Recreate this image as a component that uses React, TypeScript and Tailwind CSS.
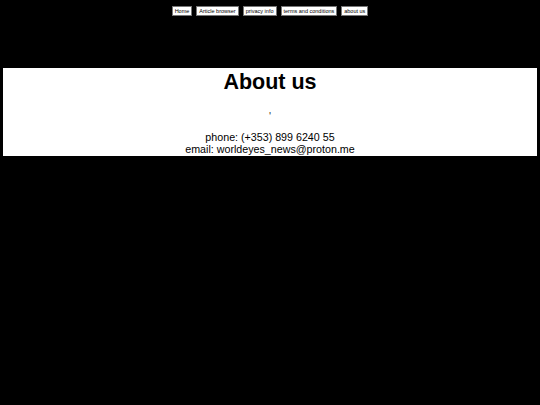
import React from "react";

export default function App() {
  const links = ["Home", "Article browser", "privacy info", "terms and conditions", "about us"];
  return (
    <div className="w-[540px] h-[405px] bg-black overflow-hidden" style={{ fontFamily: '"Liberation Sans", Arial, sans-serif' }}>
      <nav className="flex justify-center gap-[4px] pt-[6px]">
        {links.map((l) => (
          <button key={l} className="bg-white text-black text-[5.5px] leading-[6px] px-[2px] py-[1px] border border-[#767676] rounded-none" style={{ fontFamily: '"Liberation Sans", Arial, sans-serif' }}>
            {l}
          </button>
        ))}
      </nav>
      <section className="mx-[3px] mt-[52px] h-[88px] bg-white text-black text-center">
        <h1 className="text-[21.5px] leading-[25px] font-bold pt-[2px]">About us</h1>
        <p className="text-[10.7px] leading-[12px] mt-[15px] text-[#333]">'</p>
        <p className="text-[10.7px] leading-[12px] mt-[9px]">phone: (+353) 899 6240 55</p>
        <p className="text-[10.7px] leading-[12px]">email: worldeyes_news@proton.me</p>
      </section>
    </div>
  );
}
